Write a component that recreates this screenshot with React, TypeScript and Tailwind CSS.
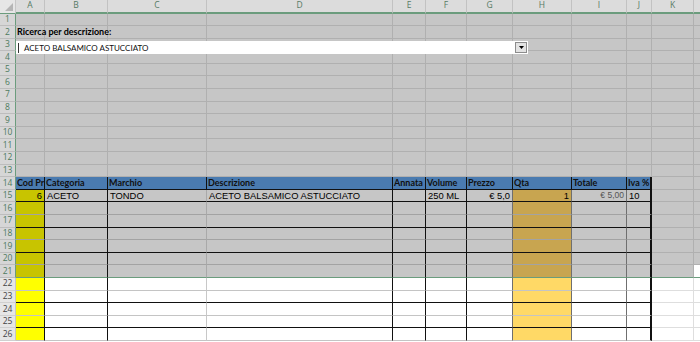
import React from 'react';

const letters = ['A', 'B', 'C', 'D', 'E', 'F', 'G', 'H', 'I', 'J', 'K', ''];

const headers = ['Cod Pr', 'Categoria', 'Marchio', 'Descrizione', 'Annata', 'Volume', 'Prezzo', 'Qta', 'Totale', 'Iva %'];

// row 15 data: [text, align]
const data: Record<number, [string, 'l' | 'r']> = {
  0: ['6', 'r'],
  1: ['ACETO', 'l'],
  2: ['TONDO', 'l'],
  3: ['ACETO BALSAMICO ASTUCCIATO', 'l'],
  5: ['250 ML', 'l'],
  6: ['€ 5,0', 'r'],
  7: ['1', 'r'],
  8: ['€ 5,00', 'r'],
  9: ['10', 'l'],
};

const blackBottom = [14, 15, 17, 19, 21, 23, 25];

function cellBg(r: number, c: number, sel: boolean) {
  if (r === 14 && c <= 9) return 'bg-[#4a7bb0]';
  if (c === 0 && r >= 15) return sel ? 'bg-[#c8c400]' : 'bg-[#ffff00]';
  if (c === 7 && r >= 15) return sel ? 'bg-[#c8a550]' : 'bg-[#ffd966]';
  return sel ? 'bg-[#c6c6c6]' : 'bg-white';
}

function rightBorder(r: number, c: number, sel: boolean) {
  if (r >= 14 && c <= 9) {
    if (c === 9) return 'border-r-2 border-r-[#111]';
    if (r === 14) return 'border-r border-r-[#111]';
    if (c === 2) return sel ? 'border-r border-r-[#a9a9a9]' : 'border-r border-r-[#c8c8c8]';
    if (c === 6 || c === 7 || c === 8) return 'border-r border-r-[#6f6f6f]';
    return 'border-r border-r-[#111]';
  }
  return sel ? 'border-r border-r-[#b0b0b0]' : 'border-r border-r-[#dedede]';
}

function bottomBorder(r: number, c: number, sel: boolean) {
  if (r === 21) return 'border-b border-b-[#6b9c7d]';
  if (r >= 14 && c <= 9) {
    if (blackBottom.includes(r)) return 'border-b border-b-[#111]';
    return sel ? 'border-b border-b-[#a3a3a3]' : 'border-b border-b-[#c4c4c4]';
  }
  return sel ? 'border-b border-b-[#b0b0b0]' : 'border-b border-b-[#dedede]';
}

function Cell({ r, c }: { r: number; c: number }) {
  const sel = r <= 21 && !(c === 11 && r === 21);
  const cls = `${cellBg(r, c, sel)} ${rightBorder(r, c, sel)} ${bottomBorder(r, c, sel)} flex items-center overflow-visible whitespace-nowrap`;

  if (r === 2 && c === 0) {
    return (
      <div className={`${cls} relative z-10 pl-[1px] font-['Lato',sans-serif] text-[9px] font-bold text-black`}>
        Ricerca per descrizione:
      </div>
    );
  }
  if (r === 14 && c <= 9) {
    return (
      <div className={`${cls} pl-[1px] font-['Lato',sans-serif] text-[9px] font-bold text-[#111]`}>
        {headers[c]}
      </div>
    );
  }
  if (r === 15 && data[c]) {
    const [t, a] = data[c];
    const color = c === 8 ? 'text-[#555] text-[8.5px]' : 'text-black text-[9.4px]';
    return (
      <div className={`${cls} ${a === 'r' ? 'justify-end pr-[2px]' : 'pl-[2px]'} ${c === 3 ? 'relative z-10' : ''} font-['Liberation_Sans',sans-serif] ${color}`}>
        {t}
      </div>
    );
  }
  return <div className={cls} />;
}

function RowHeader({ r }: { r: number }) {
  const sel = r <= 21;
  return (
    <div
      className={`flex items-center justify-center font-['Open_Sans',sans-serif] text-[8.5px] ${
        sel
          ? 'bg-[#d6d6d6] text-[#4d7a5e] border-r border-r-[#6b9c7d] border-b border-b-[#bdbdbd]'
          : 'bg-[#e6e6e6] text-[#444] border-r border-r-[#c6c6c6] border-b border-b-[#d0d0d0]'
      } ${r === 21 ? 'border-b-[#6b9c7d]' : ''}`}
    >
      {r}
    </div>
  );
}

export default function App() {
  const rows = Array.from({ length: 26 }, (_, i) => i + 1);
  return (
    <div className="relative w-[700px] h-[342px] overflow-hidden bg-white select-none">
      <div className="grid grid-cols-[16px_29px_63px_99px_186px_33px_41px_46px_59px_55px_25px_42px_60px] grid-rows-[13.5px_repeat(26,12.6px)]">
        {/* corner */}
        <div className="bg-[#e6e6e6] border-r border-r-[#c6c6c6] border-b border-b-[#6b9c7d] flex items-end justify-end p-[2px]">
          <svg width="8" height="8" viewBox="0 0 8 8">
            <polygon points="8,0 8,8 0,8" fill="#b5b5b5" />
          </svg>
        </div>
        {letters.map((l, i) => (
          <div
            key={i}
            className="bg-[#dcdcdc] border-r border-r-[#c2c2c2] border-b-2 border-b-[#6b9c7d] flex items-center justify-center font-['Open_Sans',sans-serif] text-[8.5px] text-[#557a64]"
          >
            {l}
          </div>
        ))}
        {rows.map((r) => (
          <React.Fragment key={r}>
            <RowHeader r={r} />
            {letters.map((_, c) => (
              <Cell key={c} r={r} c={c} />
            ))}
          </React.Fragment>
        ))}
      </div>

      {/* combo box over row 3 */}
      <div className="absolute left-[16px] top-[41px] w-[512px] h-[13px] bg-white flex items-center">
        <div className="w-[1px] h-[10px] ml-[2px] bg-[#333]" />
        <span className="ml-[5px] font-['Lato',sans-serif] text-[8px] text-[#111] leading-none">ACETO BALSAMICO ASTUCCIATO</span>
        <div className="ml-auto mr-[1px] w-[12px] h-[11px] bg-[#e3e3e3] border border-[#8c8c8c] flex items-center justify-center">
          <svg width="5" height="3" viewBox="0 0 5 3">
            <polygon points="0,0 5,0 2.5,3" fill="#000" />
          </svg>
        </div>
      </div>
    </div>
  );
}
